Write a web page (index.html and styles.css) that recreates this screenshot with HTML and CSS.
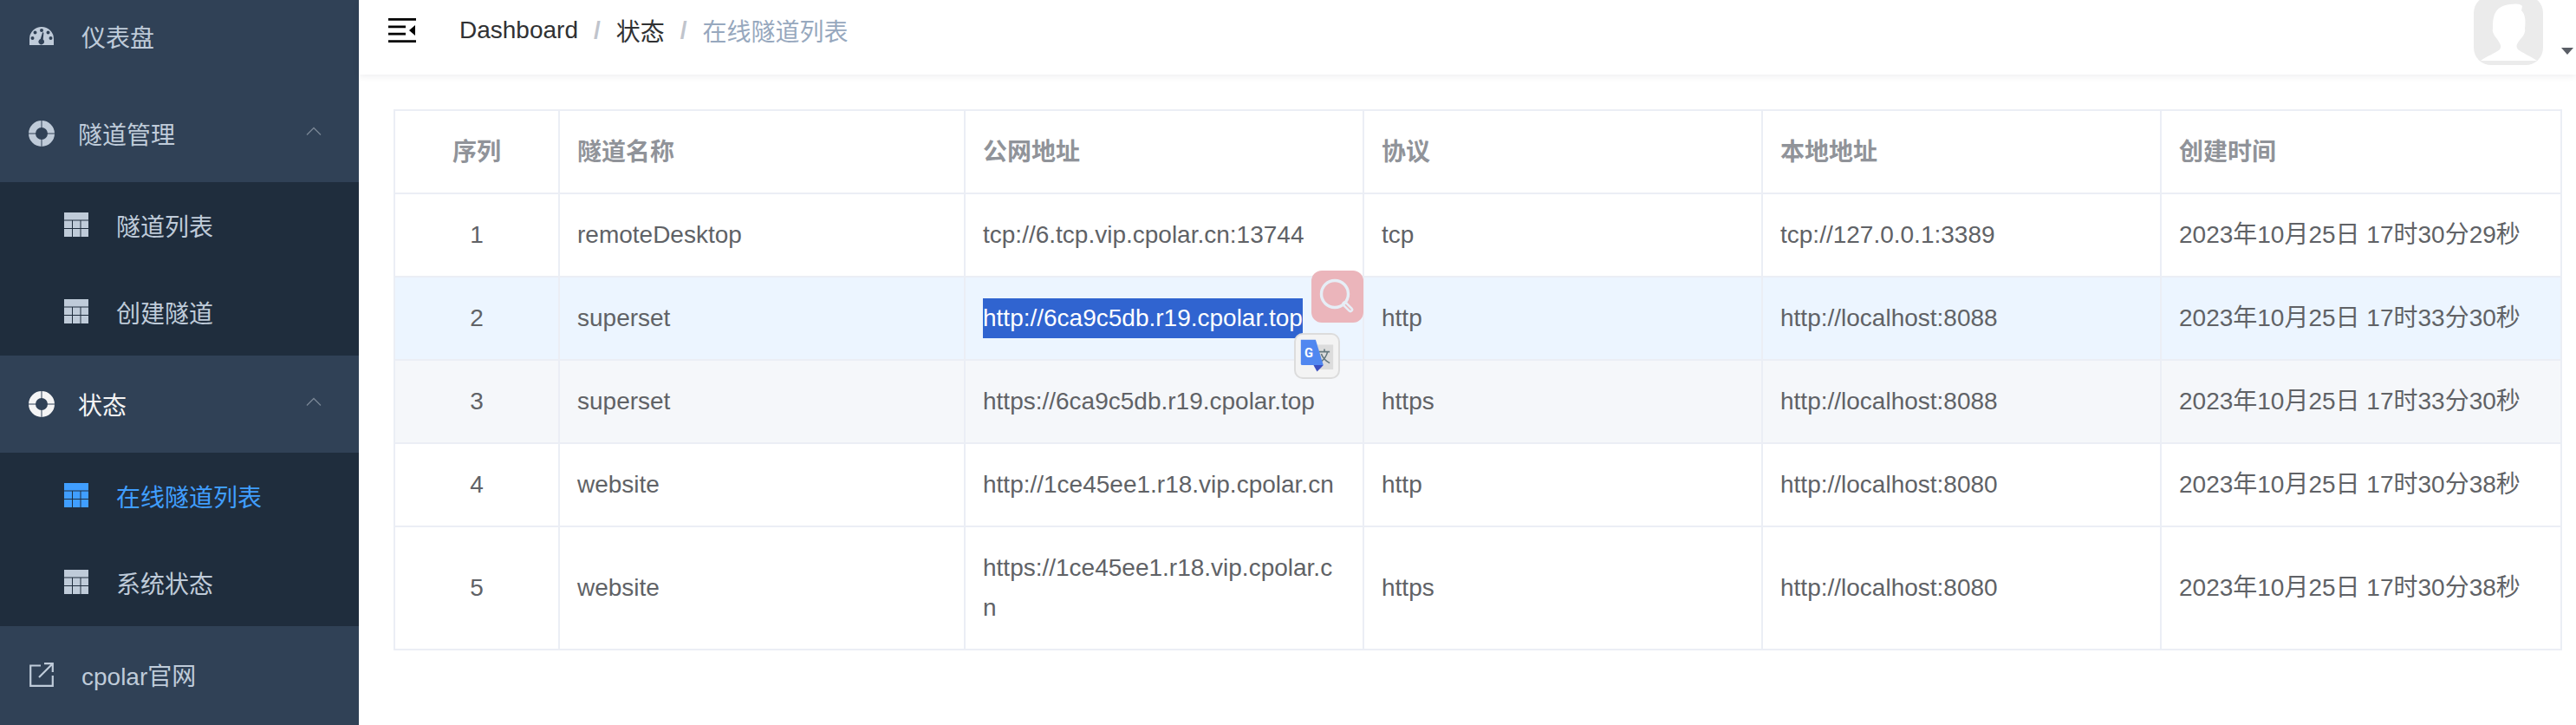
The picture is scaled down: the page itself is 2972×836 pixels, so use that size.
FILE: index.html
```html
<!DOCTYPE html>
<html lang="zh-CN">
<head>
<meta charset="utf-8">
<title>在线隧道列表</title>
<link rel="stylesheet" href="styles.css">
</head>
<body>
<svg class="defs" width="0" height="0" aria-hidden="true">
  <symbol id="i-table" viewBox="0 0 28 28">
    <path fill="currentColor" d="M0 0H28V8.500H0ZM0 9.500H9V18H0ZM10 9.500H18.500V18H10ZM19.500 9.500H28V18H19.500ZM0 19H9V28H0ZM10 19H18.500V28H10ZM19.500 19H28V28H19.500Z"/>
  </symbol>
  <symbol id="i-buoy" viewBox="0 0 30 30">
    <path fill="currentColor" fill-rule="evenodd" d="M15 0A15 15 0 1 1 15 30A15 15 0 1 1 15 0ZM15 8A7 7 0 1 0 15 22A7 7 0 1 0 15 8Z"/>
    <path stroke="#304156" stroke-width="1" d="M15 0V9M15 21V30M0 15H9M21 15H30"/>
  </symbol>
  <symbol id="i-gauge" viewBox="0 0 28 22">
    <path fill="currentColor" fill-rule="evenodd" d="M0 22V15A14 14 0 0 1 28 15V22ZM14 3A2 2 0 1 0 14 7A2 2 0 1 0 14 3ZM6.500 5.500A2 2 0 1 0 6.500 9.500A2 2 0 1 0 6.500 5.500ZM21.500 5.500A2 2 0 1 0 21.500 9.500A2 2 0 1 0 21.500 5.500ZM3.500 12A2 2 0 1 0 3.500 16A2 2 0 1 0 3.500 12ZM24.500 12A2 2 0 1 0 24.500 16A2 2 0 1 0 24.500 12Z"/>
    <path fill="#304156" d="M15.200 7L16.400 8L15.700 15.500A3.300 3.300 0 1 1 12.700 15Z"/>
  </symbol>
</svg>

<div class="app">
  <nav class="sidebar">
    <a class="item first"><svg class="ico gauge"><use href="#i-gauge"/></svg><span class="lbl">仪表盘</span></a>

    <div class="item group"><svg class="ico buoy"><use href="#i-buoy"/></svg><span class="lbl">隧道管理</span>
      <svg class="chev" viewBox="0 0 18 10"><path d="M1 9.500L9 1.500L17 9.500" fill="none" stroke="currentColor" stroke-width="1.300"/></svg></div>
    <div class="sub">
      <a class="subitem"><svg class="ico tbl"><use href="#i-table"/></svg><span>隧道列表</span></a>
      <a class="subitem"><svg class="ico tbl"><use href="#i-table"/></svg><span>创建隧道</span></a>
    </div>

    <div class="item group open"><svg class="ico buoy"><use href="#i-buoy"/></svg><span class="lbl">状态</span>
      <svg class="chev" viewBox="0 0 18 10"><path d="M1 9.500L9 1.500L17 9.500" fill="none" stroke="currentColor" stroke-width="1.300"/></svg></div>
    <div class="sub">
      <a class="subitem active"><svg class="ico tbl"><use href="#i-table"/></svg><span>在线隧道列表</span></a>
      <a class="subitem"><svg class="ico tbl"><use href="#i-table"/></svg><span>系统状态</span></a>
    </div>

    <a class="item"><svg class="ico ext" viewBox="0 0 28 28"><path fill="none" stroke="currentColor" stroke-width="2.200" d="M13 3.500H1.200V26.800H26.800V15"/><path fill="none" stroke="currentColor" stroke-width="2.200" d="M11 17L26 2M17 1.200H26.800V11"/></svg><span class="lbl">cpolar官网</span></a>
  </nav>

  <div class="main">
    <header class="topbar">
      <svg class="toggle" viewBox="0 0 32 28"><path d="M0 0H32V2.700H0ZM0 8.600H20V11.300H0ZM0 16.700H20V19.400H0ZM0 25.300H32V28H0Z"/><path d="M31 8V20L24 14Z"/></svg>
      <div class="crumbs">
        <span class="c">Dashboard</span><span class="sep">/</span><span class="c">状态</span><span class="sep">/</span><span class="c last">在线隧道列表</span>
      </div>
      <div class="user">
        <div class="avatar">
          <svg viewBox="0 0 80 80"><path fill="#fff" d="M8 75C14 70 26 66 30 62C33 58 30 55 27 50C23 45 21 41 22 38C22 25 23 12 42 10C48 9 54 9 56 12L55 17C60 22 60 30 59 38C60 42 57 47 54 50C50 55 48 58 51 62C56 66 66 70 73 75Z"/></svg>
        </div>
        <i class="caret"></i>
      </div>
    </header>

    <section class="content">
      <table class="grid">
        <colgroup><col class="c1"><col class="c2"><col class="c3"><col class="c4"><col class="c5"><col class="c6"></colgroup>
        <thead>
          <tr><th class="ctr">序列</th><th>隧道名称</th><th>公网地址</th><th>协议</th><th>本地地址</th><th>创建时间</th></tr>
        </thead>
        <tbody>
          <tr><td class="ctr">1</td><td>remoteDesktop</td><td>tcp://6.tcp.vip.cpolar.cn:13744</td><td>tcp</td><td>tcp://127.0.0.1:3389</td><td>2023年10月25日 17时30分29秒</td></tr>
          <tr class="hover"><td class="ctr">2</td><td>superset</td><td><span class="picked">http://6ca9c5db.r19.cpolar.top</span></td><td>http</td><td>http://localhost:8088</td><td>2023年10月25日 17时33分30秒</td></tr>
          <tr class="stripe"><td class="ctr">3</td><td>superset</td><td>https://6ca9c5db.r19.cpolar.top</td><td>https</td><td>http://localhost:8088</td><td>2023年10月25日 17时33分30秒</td></tr>
          <tr><td class="ctr">4</td><td>website</td><td>http://1ce45ee1.r18.vip.cpolar.cn</td><td>http</td><td>http://localhost:8080</td><td>2023年10月25日 17时30分38秒</td></tr>
          <tr class="tall"><td class="ctr">5</td><td>website</td><td>https://1ce45ee1.r18.vip.cpolar.c<br>n</td><td>https</td><td>http://localhost:8080</td><td>2023年10月25日 17时30分38秒</td></tr>
        </tbody>
      </table>

      <div class="float-search">
        <svg viewBox="0 0 60 60"><circle cx="27" cy="27" r="15.500" fill="none" stroke="#e6eef6" stroke-width="3.400"/><path d="M38.500 38.500L45 45" stroke="#e6eef6" stroke-width="6.500" stroke-linecap="round"/><path d="M39.500 39.500L45 45" stroke="#ebb5bb" stroke-width="1.500" stroke-linecap="round"/></svg>
      </div>
      <div class="float-translate">
        <svg viewBox="0 0 48 48">
          <path fill="#dcdcdc" d="M18 8H47V43H27Z"/>
          <path fill="none" stroke="#65787f" stroke-width="2" d="M27 18H42M34.500 14V18M39 18C37 26 33 30 28 33M30 21C32 26 36 31 42 34"/>
          <path fill="#5087f0" d="M1 1H22L33 37H3A2 2 0 0 1 1 35Z"/>
          <path fill="#3b4fc0" d="M19 37H33L24 46Z"/>
          <text class="g" x="6" y="26">G</text>
        </svg>
      </div>
    </section>
  </div>
</div>
</body>
</html>
```

FILE: styles.css
```css
* { box-sizing: border-box; }

html, body {
  margin: 0;
  height: 836px;
  overflow: hidden;
  background: #fff;
  font-family: "Liberation Sans", "Noto Sans CJK SC", sans-serif;
  font-size: 28px;
}

.defs { position: absolute; }

.app {
  display: flex;
  height: 836px;
  overflow: hidden;
}

/* sidebar */
.sidebar {
  flex: 0 0 414px;
  height: 836px;
  overflow: hidden;
  background: #304156;
  color: #bfcbd9;
}

.item {
  display: flex;
  align-items: center;
  height: 112px;
  padding-left: 34px;
  color: #bfcbd9;
}

.item.first {
  margin-top: -14px;
}

.ico { flex: none; display: block; }
.gauge { width: 28px; height: 22px; margin-bottom: 3px; }
.buoy { width: 30px; height: 30px; margin-left: -1px; color: #bfcbd9; }
.ext { width: 28px; height: 28px; }
.tbl { width: 28px; height: 28px; margin-top: -2px; }

.lbl { margin-left: 32px; }
.group .lbl { margin-left: 27px; }

.group { position: relative; }
.chev {
  position: absolute;
  left: 353px;
  top: 48px;
  width: 18px;
  height: 10px;
  color: #7a8695;
}

.group.open { color: #f4f4f5; }
.group.open .buoy { color: #f4f4f5; }

.sub { background: #1f2d3d; }

.subitem {
  display: flex;
  align-items: center;
  gap: 32px;
  height: 100px;
  padding-left: 74px;
  color: #bfcbd9;
}

.subitem.active { color: #409eff; }

/* main */
.main {
  flex: 1;
  min-width: 0;
  position: relative;
}

.topbar {
  display: flex;
  align-items: center;
  height: 86px;
  padding-left: 34px;
  background: #fff;
  box-shadow: 0 2px 8px rgba(0, 21, 41, .07);
  position: relative;
}

.toggle {
  flex: none;
  width: 32px;
  height: 28px;
  margin-top: -16px;
  fill: #000;
}

.crumbs {
  display: flex;
  align-items: center;
  margin-left: 50px;
  margin-top: -16px;
  color: #303133;
  white-space: nowrap;
}

.sep {
  margin: 0 18px;
  color: #c0c4cc;
  font-weight: 700;
}

.c.last { color: #97a8be; }

.user {
  margin-left: auto;
  display: flex;
  position: relative;
  width: 118px;
  height: 86px;
}

.avatar {
  width: 80px;
  height: 80px;
  margin-top: -5px;
  background: #ebebeb;
  border-radius: 20px;
  overflow: hidden;
}

.avatar svg { display: block; width: 80px; height: 80px; }

.caret {
  position: absolute;
  left: 101px;
  top: 55px;
  border-top: 8px solid #5a5e66;
  border-left: 7px solid transparent;
  border-right: 7px solid transparent;
}

/* table */
.content {
  padding: 40px 18px 0 40px;
  position: relative;
}

.grid {
  width: 2500px;
  table-layout: fixed;
  border-collapse: collapse;
  color: #606266;
}

.c1 { width: 190px; }
.c2 { width: 468px; }
.c3 { width: 460px; }
.c4 { width: 460px; }
.c5 { width: 460px; }
.c6 { width: 462px; }

.grid th, .grid td {
  border: 2px solid #ebeef5;
  padding: 0 20px;
  height: 96px;
  line-height: 46px;
  text-align: left;
  font-weight: 400;
  vertical-align: middle;
  white-space: nowrap;
}

.grid th {
  padding-top: 2px;
  color: #909399;
  font-weight: 700;
}

.grid .ctr { text-align: center; }
.hover td { background: #ecf5ff; }
.stripe td { background: #f5f7fa; }
.tall td { height: 142px; }

.picked {
  background: #3064d0;
  color: #fff;
  display: inline-block;
}

.float-search {
  position: absolute;
  left: 1099px;
  top: 226px;
  width: 60px;
  height: 60px;
  border-radius: 12px;
  background: #ebb5bb;
}

.float-search svg { display: block; width: 60px; height: 60px; }

.float-translate {
  position: absolute;
  left: 1079px;
  top: 298px;
  width: 53px;
  height: 53px;
  padding: 5px;
  border: 2px solid #dcdcdc;
  border-radius: 10px;
  background: #f3f3f3;
}

.float-translate svg { display: block; width: 39px; height: 39px; }

.g {
  font-family: "Roboto", "Liberation Sans", sans-serif;
  font-size: 18px;
  font-weight: 700;
  fill: #fff;
}
```
